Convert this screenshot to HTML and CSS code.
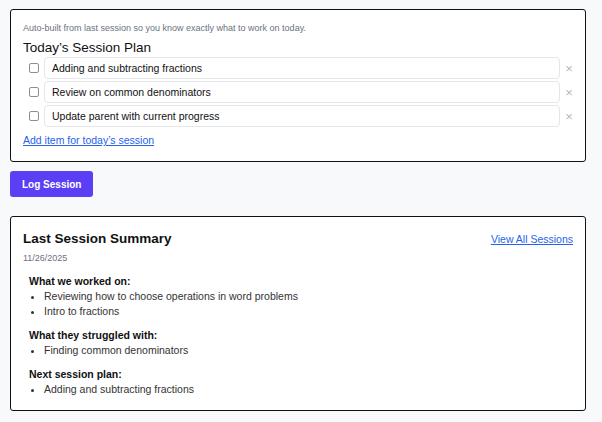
FILE: index.html
```html
<!DOCTYPE html>
<html lang="en">
<head>
  <meta charset="UTF-8">
  <title>Session Plan</title>
  <link rel="stylesheet" href="styles.css">
</head>
<body>

  <div class="page">
    <div class="card plan">
      <p class="hint">Auto-built from last session so you know exactly what to work on today.</p>
      <h2 class="plan-title">Today’s Session Plan</h2>

      <div class="plan-items">
        <div class="plan-row">
          <input type="checkbox">
          <input type="text" class="item-input" value="Adding and subtracting fractions">
          <span class="remove">&times;</span>
        </div>
        <div class="plan-row">
          <input type="checkbox">
          <input type="text" class="item-input" value="Review on common denominators">
          <span class="remove">&times;</span>
        </div>
        <div class="plan-row">
          <input type="checkbox">
          <input type="text" class="item-input" value="Update parent with current progress">
          <span class="remove">&times;</span>
        </div>
      </div>

      <a href="#" class="link add-item">Add item for today’s session</a>
    </div>

    <button class="log-btn">Log Session</button>

    <div class="card summary">
      <div class="summary-head">
        <h3>Last Session Summary</h3>
        <a href="#" class="link">View All Sessions</a>
      </div>
      <div class="date">11/26/2025</div>

      <div class="section">
        <h4>What we worked on:</h4>
        <ul>
          <li>Reviewing how to choose operations in word problems</li>
          <li>Intro to fractions</li>
        </ul>
      </div>

      <div class="section">
        <h4>What they struggled with:</h4>
        <ul>
          <li>Finding common denominators</li>
        </ul>
      </div>

      <div class="section">
        <h4>Next session plan:</h4>
        <ul>
          <li>Adding and subtracting fractions</li>
        </ul>
      </div>
    </div>
  </div>

</body>
</html>
```

FILE: styles.css
```css
body {
  margin: 0;
  font-family: "Liberation Sans", Arial, sans-serif;
  background-color: #f8f9fb;
  color: #111;
}

.page {
  width: 576px;
  padding: 9px 10px;
}

.card {
  background: #fff;
  border: 1px solid #111;
  border-radius: 3px;
}

.plan {
  padding: 12px 12px 13px 12px;
}

.hint {
  margin: 0;
  font-size: 9px;
  line-height: 13px;
  color: #6b7280;
}

.plan-title {
  margin: 4px 0 0;
  font-size: 13.5px;
  font-weight: normal;
  line-height: 18px;
}

.plan-items {
  display: flex;
  flex-direction: column;
  gap: 2px;
}

.plan-row {
  display: flex;
  align-items: center;
  height: 22px;
}

.plan-row input[type="checkbox"] {
  appearance: none;
  width: 10px;
  height: 10px;
  margin: 0 5px 0 6px;
  border: 1px solid #8f8f8f;
  border-radius: 2px;
  background: #fff;
}

.item-input {
  flex: 1;
  height: 22px;
  box-sizing: border-box;
  padding: 0 7px;
  font-family: inherit;
  font-size: 10.5px;
  color: #111;
  border: 1px solid #e6e7ea;
  border-radius: 4px;
  background: #fff;
}

.remove {
  width: 8px;
  margin-left: 5px;
  text-align: center;
  font-size: 13px;
  color: #b4b8cc;
}

.link {
  color: #2563eb;
  font-size: 10.5px;
  text-decoration: underline;
}

.add-item {
  display: inline-block;
  margin-top: 6px;
  line-height: 14px;
}

.log-btn {
  display: block;
  margin: 9px 0 19px;
  height: 26px;
  padding: 0 12px;
  font-family: inherit;
  font-size: 10px;
  font-weight: bold;
  color: #fff;
  background: #5a3ff5;
  border: none;
  border-radius: 3px;
}

.summary {
  padding: 13px 12px 13px 12px;
}

.summary-head {
  display: flex;
  justify-content: space-between;
  align-items: center;
}

.summary-head h3 {
  margin: 0;
  font-size: 13.5px;
  line-height: 18px;
}

.date {
  margin-top: 4px;
  font-size: 9px;
  line-height: 12px;
  color: #6b7280;
}

.section {
  padding-left: 6px;
  margin-top: 10px;
}

.section + .section {
  margin-top: 9px;
}

.section h4 {
  margin: 0;
  font-size: 10.5px;
  line-height: 15px;
}

.section ul {
  margin: 0;
  padding-left: 15px;
  font-size: 10.5px;
  line-height: 15px;
  color: #333;
}
```
